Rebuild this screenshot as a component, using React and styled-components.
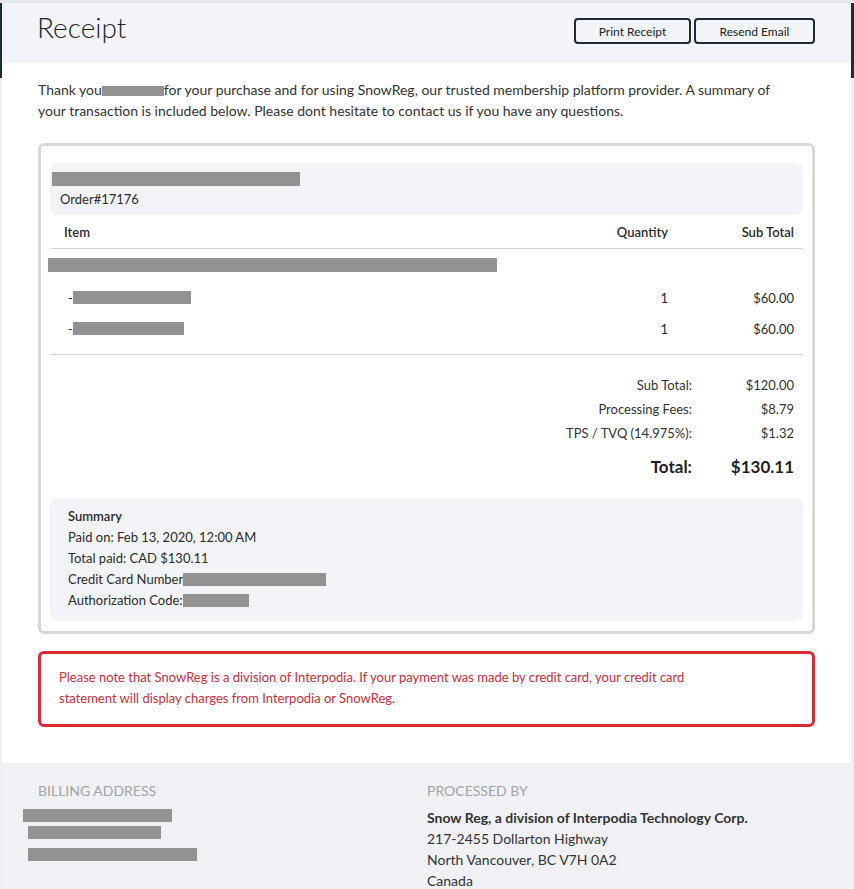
import React from 'react';
import styled, { createGlobalStyle } from 'styled-components';

const GlobalStyle = createGlobalStyle`
  body {
    margin: 0;
    background: linear-gradient(#e6e7eb 0 3px, #1c2b3d 3px 78px, #eef0f4 78px);
    font-family: Lato, "Open Sans", sans-serif;
    color: #2b2b2b;
  }
`;

const Page = styled.div`
  padding: 3px 3px 0 2px;
`;

const Sheet = styled.div`
  background: #fff;
`;

const Header = styled.div`
  background: #f3f4f8;
  height: 60px;
  padding: 0 36px;
  display: flex;
  justify-content: space-between;
  align-items: flex-start;
`;

const Title = styled.h1`
  margin: 7px 0 0 -1px;
  font-size: 28px;
  font-weight: 300;
  color: #222;
`;

const Buttons = styled.div`
  display: flex;
  gap: 3px;
  margin-top: 15px;
`;

const Button = styled.button`
  width: ${p => p.w}px;
  height: 26px;
  border: 2px solid #1e2a3a;
  border-radius: 4px;
  background: transparent;
  font-family: inherit;
  font-size: 12px;
  color: #222;
`;

const Body = styled.div`
  padding: 16px 36px 36px;
`;

const Intro = styled.p`
  margin: 0 0 22px;
  max-width: 756px;
  font-size: 14px;
  line-height: 21px;
  color: #333;
`;

const Redact = styled.span`
  display: ${p => (p.block ? 'block' : 'inline-block')};
  vertical-align: middle;
  background: #929292;
  width: ${p => p.w}px;
  height: ${p => p.h || 13}px;
`;

const Box = styled.div`
  border: 3px solid #d8d8d8;
  border-radius: 6px;
  padding: 17px 9px 10px;
`;

const Panel = styled.div`
  background: #f3f4f8;
  border-radius: 8px;
  padding: ${p => p.pad};
  font-size: 13px;
  line-height: 21px;
`;

const PanelLine = styled.div`
  display: flex;
  align-items: center;
  padding-left: ${p => p.indent || 0}px;
  margin-top: ${p => p.gap || 0}px;
`;

const Table = styled.div`
  font-size: 13px;
`;

const Row = styled.div`
  display: grid;
  grid-template-columns: 1fr 120px 126px;
  align-items: center;
  height: ${p => p.h}px;
  padding-right: 9px;
  border-bottom: ${p => (p.line ? '1px solid #d6d6d6' : 'none')};
  font-weight: ${p => (p.head ? 600 : 400)};
  color: #2b2b2b;
`;

const Cell = styled.div`
  padding-left: ${p => p.indent || 0}px;
  display: flex;
  align-items: center;
  justify-content: ${p => (p.align === 'right' ? 'flex-end' : 'flex-start')};
`;

const Group = styled.div`
  padding: 9px 0 10px;
  border-bottom: 1px solid #d6d6d6;
`;

const Items = styled.div`
  margin-top: 10px;
`;

const Totals = styled.div`
  padding: 21px 9px 22px 0;
  display: grid;
  grid-template-columns: 1fr 102px;
  row-gap: 6px;
  font-size: 13px;
  line-height: 18px;
  color: #333;
`;

const TLabel = styled.div`
  text-align: right;
  font-size: ${p => (p.big ? 17 : 13)}px;
  font-weight: ${p => (p.big ? 700 : 400)};
  margin-top: ${p => (p.big ? 10 : 0)}px;
  color: ${p => (p.big ? '#1f1f1f' : '#333')};
`;

const SumTitle = styled.div`
  font-weight: 600;
`;

const Notice = styled.div`
  margin-top: 17px;
  border: 3px solid #dc2a33;
  border-radius: 6px;
  padding: 13px 80px 15px 18px;
  font-size: 13px;
  line-height: 21px;
  color: #d42a38;
`;

const Footer = styled.div`
  background: #f0f1f5;
  padding: 19px 36px 12px;
  display: grid;
  grid-template-columns: 389px 1fr;
`;

const FootHead = styled.div`
  font-size: 14px;
  color: #a3a3a3;
  text-transform: uppercase;
  margin-bottom: 8px;
`;

const FootLine = styled.div`
  font-size: 14px;
  line-height: 21px;
  color: #333;
  font-weight: ${p => (p.bold ? 700 : 400)};
`;

const RedactStack = styled.div`
  display: flex;
  flex-direction: column;
  align-items: flex-start;
  gap: 4px;
  margin-left: -15px;
  padding-top: 2px;
`;

const summary = [
  ['Paid on: Feb 13, 2020, 12:00 AM'],
  ['Total paid: CAD $130.11'],
  ['Credit Card Number', 143],
  ['Authorization Code:', 66],
];

const items = [118, 111];

export default function App() {
  return (
    <>
      <GlobalStyle />
      <Page>
        <Sheet>
          <Header>
            <Title>Receipt</Title>
            <Buttons>
              <Button w={117}>Print Receipt</Button>
              <Button w={121}>Resend Email</Button>
            </Buttons>
          </Header>
          <Body>
            <Intro>
              Thank you<Redact w={62} h={10} />for your purchase and for using SnowReg, our trusted membership platform
              provider. A summary of your transaction is included below. Please dont hesitate to contact us if you
              have any questions.
            </Intro>
            <Box>
              <Panel pad="9px 10px 5px 2px">
                <Redact block w={248} h={14} />
                <PanelLine indent={8} gap={3}>Order#17176</PanelLine>
              </Panel>
              <Table>
                <Row h={33} line head>
                  <Cell indent={14}>Item</Cell>
                  <Cell align="right">Quantity</Cell>
                  <Cell align="right">Sub Total</Cell>
                </Row>
                <Group>
                  <Redact block w={449} h={14} style={{ marginLeft: -2 }} />
                  <Items>
                    {items.map((w, i) => (
                      <Row h={31} key={i}>
                        <Cell indent={18}>-<Redact w={w} /></Cell>
                        <Cell align="right">1</Cell>
                        <Cell align="right">$60.00</Cell>
                      </Row>
                    ))}
                  </Items>
                </Group>
              </Table>
              <Totals>
                <TLabel>Sub Total:</TLabel>
                <TLabel>$120.00</TLabel>
                <TLabel>Processing Fees:</TLabel>
                <TLabel>$8.79</TLabel>
                <TLabel>TPS / TVQ (14.975%):</TLabel>
                <TLabel>$1.32</TLabel>
                <TLabel big>Total:</TLabel>
                <TLabel big>$130.11</TLabel>
              </Totals>
              <Panel pad="8px 18px 10px">
                <SumTitle>Summary</SumTitle>
                {summary.map(([text, w]) => (
                  <PanelLine key={text}>
                    {text}
                    {w && <Redact w={w} />}
                  </PanelLine>
                ))}
              </Panel>
            </Box>
            <Notice>
              Please note that SnowReg is a division of Interpodia. If your payment was made by credit card, your credit
              card statement will display charges from Interpodia or SnowReg.
            </Notice>
          </Body>
          <Footer>
            <div>
              <FootHead>Billing Address</FootHead>
              <RedactStack>
                <Redact w={149} />
                <Redact w={133} style={{ marginLeft: 5 }} />
                <Redact w={169} style={{ marginLeft: 5, marginTop: 5 }} />
              </RedactStack>
            </div>
            <div>
              <FootHead>Processed By</FootHead>
              <FootLine bold>Snow Reg, a division of Interpodia Technology Corp.</FootLine>
              <FootLine>217-2455 Dollarton Highway</FootLine>
              <FootLine>North Vancouver, BC V7H 0A2</FootLine>
              <FootLine>Canada</FootLine>
            </div>
          </Footer>
        </Sheet>
      </Page>
    </>
  );
}
